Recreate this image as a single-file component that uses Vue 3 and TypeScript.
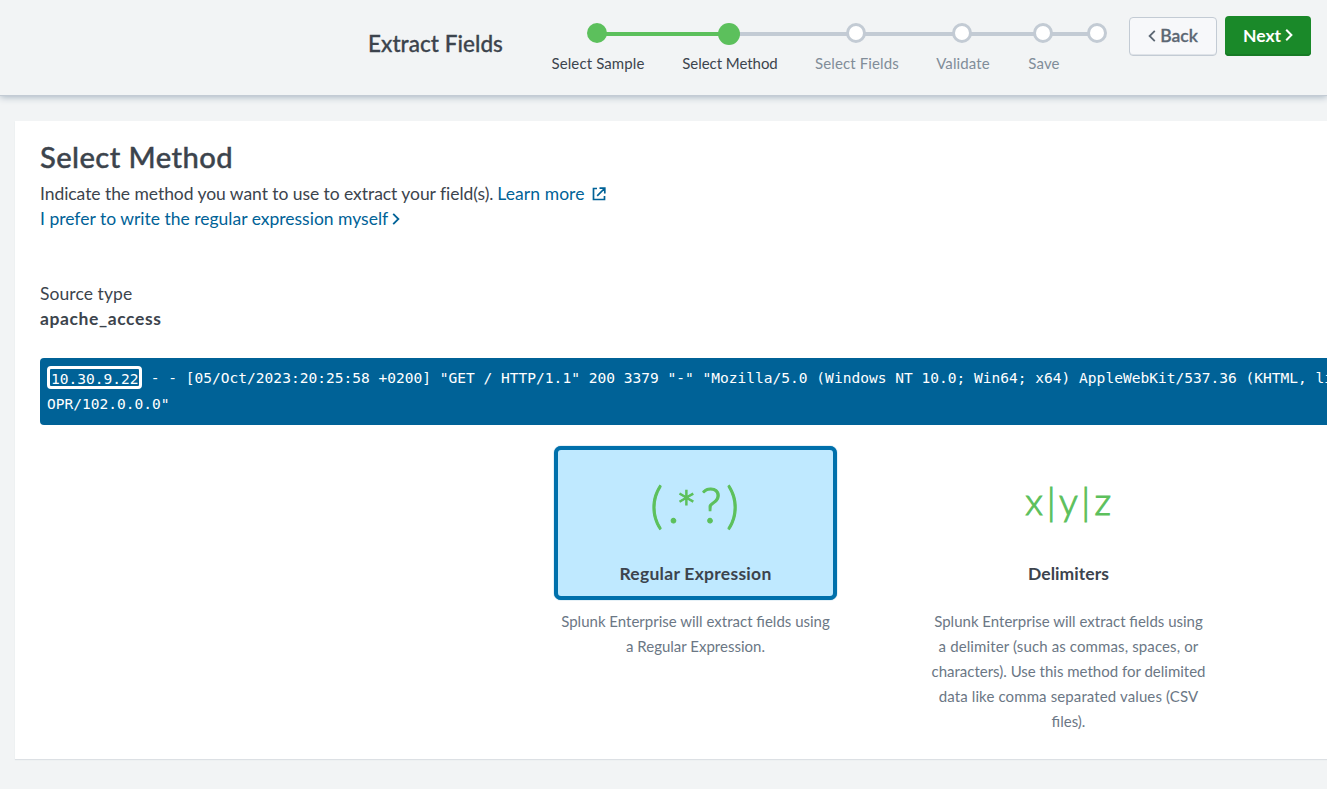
<script setup lang="ts">
interface Step {
  label: string
  state: 'done' | 'current' | 'todo'
  key: string
}

const steps: Step[] = [
  { label: 'Select Sample', state: 'done', key: 'sample' },
  { label: 'Select Method', state: 'current', key: 'choose' },
  { label: 'Select Fields', state: 'todo', key: 'fields' },
  { label: 'Validate', state: 'todo', key: 'validate' },
  { label: 'Save', state: 'todo', key: 'save' },
  { label: '', state: 'todo', key: 'end' },
]

const regexGlyphs: string[] = ['(', '.', '*', '?', ')']
const delimGlyphs: string[] = ['x', '|', 'y', '|', 'z']

const delimText: string[] = [
  'Splunk Enterprise will extract fields using',
  'a delimiter (such as commas, spaces, or',
  'characters). Use this method for delimited',
  'data like comma separated values (CSV',
  'files).',
]
const regexText: string[] = [
  'Splunk Enterprise will extract fields using',
  'a Regular Expression.',
]
</script>

<template>
  <div class="page">
    <header class="header">
      <h1 class="title">Extract Fields</h1>
      <ol class="steps">
        <li v-for="s in steps" :key="s.key" class="step" :class="[s.state, s.key]">
          <div class="track">
            <i class="line before"></i><i class="dot"></i><i class="line after"></i>
          </div>
          <span class="label">{{ s.label }}</span>
        </li>
      </ol>
      <button class="btn back">
        <svg width="8" height="12" viewBox="0 0 8 12"><path d="M6.8 .8 1.6 6l5.2 5.2" /></svg>
        <span>Back</span>
      </button>
      <button class="btn next">
        <span>Next</span>
        <svg width="8" height="12" viewBox="0 0 8 12"><path d="M1.2 .8 6.4 6 1.2 11.2" /></svg>
      </button>
    </header>

    <main class="card">
      <h2 class="heading">Select Method</h2>
      <p class="row">
        <span class="intro">Indicate the method you want to use to extract your field(s).</span>
        <a class="learn">Learn more</a>
        <svg class="ext" width="14" height="14" viewBox="0 0 14 14">
          <path d="M5 1.5H1.5v11h11V9M7.5 1.2h5.3v5.3M12.5 1.5 5.2 8.8" />
        </svg>
      </p>
      <p class="row">
        <a class="prefer">I prefer to write the regular expression myself</a>
        <svg class="chev" width="8" height="12" viewBox="0 0 8 12"><path d="M1.2 .8 6.4 6 1.2 11.2" /></svg>
      </p>
      <div class="source">
        <div><span class="src-label">Source type</span></div>
        <div><strong class="src-value">apache_access</strong></div>
      </div>
      <div class="event">
        <div class="event-line"><span class="field">10.30.9.22</span> - - [05/Oct/2023:20:25:58 +0200] "GET / HTTP/1.1" 200 3379 "-" "Mozilla/5.0 (Windows NT 10.0; Win64; x64) AppleWebKit/537.36 (KHTML, li</div>
        <div class="event-line second">OPR/102.0.0.0"</div>
      </div>
      <div class="methods">
        <section class="method">
          <div class="tile selected">
            <div class="glyphs regex"><span v-for="(g, i) in regexGlyphs" :key="i" :class="'g' + i">{{ g }}</span></div>
            <strong class="name regex-name">Regular Expression</strong>
          </div>
          <p class="desc"><span v-for="(t, i) in regexText" :key="i" :class="'r' + i">{{ t }}</span></p>
        </section>
        <section class="method">
          <div class="tile">
            <div class="glyphs delim"><span v-for="(g, i) in delimGlyphs" :key="i" :class="'g' + i">{{ g }}</span></div>
            <strong class="name delim-name">Delimiters</strong>
          </div>
          <p class="desc"><span v-for="(t, i) in delimText" :key="i" :class="'d' + i">{{ t }}</span></p>
        </section>
      </div>
    </main>
  </div>
</template>

<style>
body {
  background: #f2f4f5;
}
</style>

<style scoped>
.page {
  height: 789px;
  overflow: hidden;
  background: #f2f4f5;
  font: 17.5px/25px Lato, "Open Sans", sans-serif;
  color: #3c444d;
  white-space: nowrap;
}
h1, h2, p, ol {
  margin: 0;
  padding: 0;
}
svg {
  fill: none;
  stroke: currentColor;
  flex: none;
}
.header {
  display: flex;
  align-items: flex-start;
  box-sizing: border-box;
  height: 95px;
  padding-left: 368px;
  box-shadow: 0 1px 0 #c3cbd4, 0 2px 7px #a3b1bf;
}
.title {
  flex: none;
  width: 163px;
  padding-top: 31px;
  font-size: 22.5px;
  line-height: 25px;
  font-weight: 500;
  letter-spacing: 0.05px;
  -webkit-text-stroke: 0.3px;
}
.steps {
  display: flex;
  flex: none;
  list-style: none;
  padding-top: 23px;
}
.step {
  display: flex;
  flex-direction: column;
  align-items: center;
  width: 132px;
}
.fields { width: 122px; }
.validate { width: 90px; }
.save { width: 72px; }
.end { width: 36px; }
.track {
  display: flex;
  width: 100%;
  height: 28px;
}
.line {
  flex: 1;
  height: 4px;
  margin: 9px -1px 0;
  background: #c3cbd4;
}
.done .after,
.current .before { background: #5cc05c; }
.done .before,
.end .after { background: transparent; }
.dot {
  position: relative;
  box-sizing: border-box;
  width: 20px;
  height: 20px;
  border: 3px solid #c3cbd4;
  border-radius: 50%;
  background: #fff;
}
.done .dot,
.current .dot {
  border: 0;
  background: #5cc05c;
}
.current .dot {
  width: 22px;
  height: 22px;
}
.label {
  padding-left: 2px;
  font-size: 15px;
  letter-spacing: 0.12px;
  color: #3c444d;
}
.current .label { letter-spacing: -0.05px; }
.todo .label { color: #818d99; }
.btn {
  display: flex;
  flex: none;
  align-items: center;
  justify-content: center;
  box-sizing: border-box;
  height: 39px;
  padding: 0;
  border-radius: 4px;
  font: 600 17.5px/25px Lato, sans-serif;
}
.btn svg { stroke-width: 1.8; }
.back {
  gap: 4px;
  width: 88px;
  margin: 17px 0 0 14px;
  padding-bottom: 2px;
  color: #5c6773;
  border: 1px solid #c3cbd4;
  background: #f7f8fa;
  box-shadow: inset 0 -1px 0 #dfe3e8;
  -webkit-text-stroke: 0.3px;
}
.next {
  gap: 4px;
  width: 86px;
  height: 40px;
  margin: 16px 0 0 8px;
  padding-bottom: 2px;
  color: #fff;
  border: 0;
  background: #1a8929;
  box-shadow: inset 0 -2px 0 #177b25;
  font-weight: 700;
}
.next svg { stroke-width: 2; }
.card {
  box-sizing: border-box;
  width: 1400px;
  height: 638px;
  margin: 26px 0 0 15px;
  padding: 20px 0 0 25px;
  background: #fff;
  box-shadow: 0 1px 1px #dce0e4;
}
.heading {
  height: 40px;
  font-size: 29.2px;
  line-height: 32px;
  font-weight: 500;
  letter-spacing: 0.42px;
  -webkit-text-stroke: 0.4px;
}
.row {
  display: flex;
  align-items: center;
  height: 25px;
}
.learn,
.prefer,
.ext,
.chev { color: #006297; }
.intro { letter-spacing: -0.055px; }
.learn {
  margin-left: 4px;
  letter-spacing: 0.07px;
}
.ext {
  margin-left: 7px;
  stroke-width: 1.7;
}
.chev {
  margin-left: 4px;
  stroke-width: 1.8;
}
.source {
  padding-top: 50px;
  height: 50px;
}
.src-label { letter-spacing: 0.08px; }
.src-value { letter-spacing: 0.6px; }
.event {
  box-sizing: border-box;
  height: 67px;
  margin-top: 27px;
  padding: 7px;
  border-radius: 4px 0 0 4px;
  background: #006297;
  color: #fff;
  font-family: "DejaVu Sans Mono", monospace;
  font-size: 14.555px;
}
.event-line { height: 26px; }
.field {
  display: inline-block;
  box-sizing: border-box;
  width: 95px;
  height: 23px;
  padding-left: 1px;
  border: 3px solid #fff;
  border-radius: 4px;
  line-height: 19px;
  vertical-align: top;
  margin-top: 1px;
}
.methods {
  display: flex;
  gap: 90px;
  padding: 21px 0 0 514px;
}
.method {
  flex: none;
  width: 283px;
}
.tile {
  display: flex;
  flex-direction: column;
  align-items: center;
  box-sizing: border-box;
  height: 154px;
  border: 4px solid transparent;
  border-radius: 7px;
}
.tile.selected {
  border-color: #0070ab;
  background: #bfe9ff;
  box-shadow: 0 0 1px #0070ab;
}
.glyphs {
  display: flex;
  height: 111px;
  color: #5cc05c;
  font-weight: 300;
}
.glyphs span {
  display: flex;
  justify-content: center;
}
.regex {
  padding-right: 9px;
  font-size: 49px;
  line-height: 108px;
  -webkit-text-stroke: 1.1px;
}
.regex .g0 { width: 20px; }
.regex .g1 { width: 14px; }
.regex .g2 {
  width: 12px;
  padding-top: 4px;
}
.regex .g3 { width: 37px; }
.regex .g4 { width: 6px; }
.delim {
  font-size: 37.5px;
  line-height: 102px;
  -webkit-text-stroke: 1px;
}
.delim span { width: 17.2px; }
.name { font-weight: 700; }
.regex-name { letter-spacing: 0.27px; }
.delim-name { letter-spacing: 0.05px; }
.desc {
  display: flex;
  flex-direction: column;
  align-items: center;
  padding-top: 9px;
  font-size: 15px;
  color: #6b7785;
}
.d1 { letter-spacing: 0.12px; }
.d3 { letter-spacing: 0.12px; }
</style>
